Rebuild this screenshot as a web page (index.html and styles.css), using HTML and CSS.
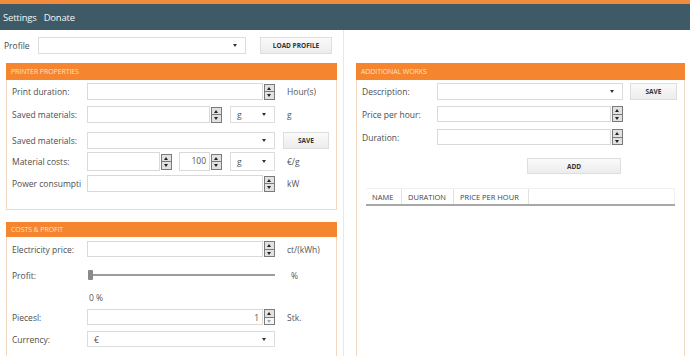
FILE: index.html
```html
<!DOCTYPE html>
<html>
<head>
<meta charset="utf-8">
<link rel="stylesheet" href="styles.css">
</head>
<body>
<div class="topline"></div>
<nav class="nav"><span class="nav-item">Settings</span><span class="nav-item">Donate</span></nav>
<div class="main">
  <div class="col-left">
    <div class="profile-row">
      <span class="profile-label">Profile</span>
      <div class="combo w-profile"><span class="combo-val"></span><span class="caret"></span></div>
      <div class="btn w-load">LOAD PROFILE</div>
    </div>

    <section class="group g-printer">
      <div class="group-head">PRINTER PROPERTIES</div>
      <div class="group-body">
        <div class="row r1">
          <span class="lbl">Print duration:</span>
          <div class="numbox w188"><div class="num"></div><div class="spin"><i class="up"></i><i class="dn"></i></div></div>
          <span class="unit">Hour(s)</span>
        </div>
        <div class="row r2">
          <span class="lbl">Saved materials:</span>
          <div class="numbox w135"><div class="num"></div><div class="spin"><i class="up"></i><i class="dn"></i></div></div>
          <div class="combo w45 ml8"><span class="combo-val">g</span><span class="caret"></span></div>
          <span class="unit">g</span>
        </div>
        <div class="row r3">
          <span class="lbl">Saved materials:</span>
          <div class="combo w188"><span class="combo-val"></span><span class="caret"></span></div>
          <div class="btn w46 ml8">SAVE</div>
        </div>
        <div class="row r4">
          <span class="lbl">Material costs:</span>
          <div class="numbox w85"><div class="num"></div><div class="spin"><i class="up"></i><i class="dn"></i></div></div>
          <div class="numbox w43 ml7"><div class="num">100</div><div class="spin"><i class="up"></i><i class="dn"></i></div></div>
          <div class="combo w45 ml8"><span class="combo-val">g</span><span class="caret"></span></div>
          <span class="unit">€/g</span>
        </div>
        <div class="row r5">
          <span class="lbl">Power consumpti</span>
          <div class="numbox w188"><div class="num"></div><div class="spin"><i class="up"></i><i class="dn"></i></div></div>
          <span class="unit">kW</span>
        </div>
      </div>
    </section>

    <section class="group g-costs">
      <div class="group-head">COSTS &amp; PROFIT</div>
      <div class="group-body">
        <div class="row c1">
          <span class="lbl">Electricity price:</span>
          <div class="numbox w188"><div class="num"></div><div class="spin"><i class="up"></i><i class="dn"></i></div></div>
          <span class="unit">ct/(kWh)</span>
        </div>
        <div class="row c2">
          <span class="lbl">Profit:</span>
          <div class="slider w188"><span class="thumb"></span><span class="track"></span></div>
          <span class="unit u-pct">%</span>
        </div>
        <div class="row c3">
          <span class="lbl"></span>
          <span class="pct">0 %</span>
        </div>
        <div class="row c4">
          <span class="lbl">Piecesl:</span>
          <div class="numbox w188"><div class="num">1</div><div class="spin"><i class="up"></i><i class="dn light"></i></div></div>
          <span class="unit">Stk.</span>
        </div>
        <div class="row c5">
          <span class="lbl">Currency:</span>
          <div class="combo w188"><span class="combo-val">€</span><span class="caret"></span></div>
        </div>
      </div>
    </section>
  </div>

  <div class="col-right">
    <section class="group g-works">
      <div class="group-head">ADDITIONAL WORKS</div>
      <div class="group-body">
        <div class="row w1">
          <span class="lbl">Description:</span>
          <div class="combo w186"><span class="combo-val"></span><span class="caret"></span></div>
          <div class="btn w47 ml7">SAVE</div>
        </div>
        <div class="row w2">
          <span class="lbl">Price per hour:</span>
          <div class="numbox w186"><div class="num"></div><div class="spin"><i class="up"></i><i class="dn"></i></div></div>
        </div>
        <div class="row w3">
          <span class="lbl">Duration:</span>
          <div class="numbox w186"><div class="num"></div><div class="spin"><i class="up"></i><i class="dn"></i></div></div>
        </div>
        <div class="add-row"><div class="btn w94">ADD</div></div>
        <div class="table">
          <div class="thead">
            <span class="th th-name">NAME</span>
            <span class="th th-dur">DURATION</span>
            <span class="th th-price">PRICE PER HOUR</span>
            <span class="th th-rest"></span>
          </div>
        </div>
      </div>
    </section>
  </div>
</div>
</body>
</html>
```
FILE: styles.css
```css
* { box-sizing: border-box; }
html, body { margin: 0; padding: 0; }
body {
  width: 690px;
  height: 356px;
  overflow: hidden;
  background: #fff;
  font-family: "Open Sans", "Noto Sans", "Liberation Sans", sans-serif;
  font-size: 8.5px;
  color: #4a4a4a;
}
.topline { height: 4px; background: #f28a3c; }
.nav {
  height: 26px;
  background: #3e5a67;
  display: flex;
  align-items: center;
  padding-left: 3px;
  gap: 7px;
}
.nav-item { color: #f2f5f6; font-size: 9.5px; letter-spacing: -0.2px; }

.main { display: flex; height: 326px; }
.col-left {
  width: 344px;
  border-right: 1px solid #e8e8e8;
  padding-top: 7px;
}
.col-right { flex: 1; padding-top: 33px; padding-left: 12px; }

.profile-row { display: flex; align-items: center; height: 17px; padding-left: 4px; }
.profile-label { width: 34px; }
.w-profile { width: 208px; height: 16px; }
.w-load { width: 72px; height: 17px; margin-left: 14px; }

.group {
  border: 1px solid #f1d6c0;
  border-top: none;
  background: #fff;
}
.g-printer { margin: 9px 0 0 6px; width: 331px; height: 147px; }
.g-costs { margin: 12px 0 0 6px; width: 331px; height: 140px; }
.g-works { width: 329px; height: 300px; }
.group-head {
  height: 17px;
  margin: 0 -1px;
  background: #f5852f;
  color: #fde0c8;
  font-size: 7px;
  line-height: 17px;
  padding-left: 5px;
  letter-spacing: -0.1px;
}
.g-costs .group-head { height: 15px; line-height: 15px; }
.group-body { padding: 0 5px; }

.row { display: flex; align-items: center; height: 17px; }
.lbl { width: 75px; flex: none; white-space: nowrap; overflow: hidden; color: #4e4e4e; }
.unit { margin-left: 12px; color: #555; }
.u-pct { margin-left: 16px; }

.r1 { margin-top: 3px; }
.r2 { margin-top: 6px; }
.r3 { margin-top: 9px; }
.r4 { margin-top: 3px; height: 19px; }
.r5 { margin-top: 4px; }

.c1 { margin-top: 4px; height: 16px; }
.c2 { margin-top: 10px; height: 16px; }
.c3 { margin-top: 8px; height: 12px; }
.c4 { margin-top: 6px; height: 16px; }
.c5 { margin-top: 6px; height: 16px; }

.w1 { margin-top: 3px; }
.w2 { margin-top: 6px; height: 16px; }
.w3 { margin-top: 7px; height: 16px; }

.w188 { width: 188px; }
.w186 { width: 186px; }
.w135 { width: 135px; }
.w85 { width: 85px; }
.w43 { width: 43px; }
.w45 { width: 45px; }
.w46 { width: 46px; }
.w47 { width: 47px; }
.w94 { width: 94px; }
.ml7 { margin-left: 7px; }
.ml8 { margin-left: 8px; }

.numbox { display: flex; height: 100%; }
.num {
  flex: 1;
  border: 1px solid #d9d9d9;
  background: #fff;
  text-align: right;
  padding-right: 3px;
  line-height: 15px;
  color: #555;
}
.spin {
  width: 11px;
  margin-left: 1px;
  display: flex;
  flex-direction: column;
  justify-content: center;
  border: 1px solid #7a7a7a;
  height: 16px;
  align-self: center;
  background: #ececec;
}
.spin i {
  display: block;
  flex: 1;
  position: relative;
  background: #e2e2e2;
}
.spin i.up { border-bottom: 1px solid #7a7a7a; }
.spin i::after {
  content: "";
  position: absolute;
  left: 2px;
  width: 0; height: 0;
  border-left: 2.5px solid transparent;
  border-right: 2.5px solid transparent;
}
.spin i.up::after { top: 2px; border-bottom: 3px solid #222; }
.spin i.dn::after { top: 2px; border-top: 3px solid #222; }
.spin i.light { background: #f6f6f6; }
.spin i.light::after { border-top-color: #aaa; }

.combo {
  height: 100%;
  border: 1px solid #dcdcdc;
  background: #fff;
  display: flex;
  align-items: center;
  padding: 0 6px;
  position: relative;
}
.combo-val { flex: 1; color: #555; }
.caret {
  width: 0; height: 0;
  border-left: 2px solid transparent;
  border-right: 2px solid transparent;
  border-top: 3px solid #333;
  margin-right: 2px;
}

.btn {
  height: 100%;
  border: 1px solid #dedede;
  background: linear-gradient(#fafafa, #ececec);
  display: flex;
  align-items: center;
  justify-content: center;
  font-size: 6.5px;
  font-weight: 700;
  color: #333;
}

.slider { position: relative; height: 100%; display: flex; align-items: center; }
.thumb {
  width: 5px; height: 10px;
  background: #8a8a8a;
  border-radius: 1px;
  margin-left: 1px;
  flex: none;
}
.track { flex: 1; height: 2px; background: #9c9c9c; }
.pct { color: #555; margin-left: 2px; }

.add-row { display: flex; padding-left: 165px; margin-top: 13px; height: 16px; }
.table { margin: 14px 0 0 4px; width: 309px; }
.thead {
  display: flex;
  height: 18px;
  border-bottom: 2px solid #a8a8a8;
  border-top: 1px solid #f0f0f0;
}
.th {
  display: flex;
  align-items: center;
  padding-left: 6px;
  font-size: 7.5px;
  color: #444;
  border-right: 1px solid #e2e2e2;
}
.th-name { width: 36px; }
.th-dur { width: 52px; }
.th-price { width: 75px; }
.th-rest { flex: 1; border-right: 1px solid #f0f0f0; }
```
